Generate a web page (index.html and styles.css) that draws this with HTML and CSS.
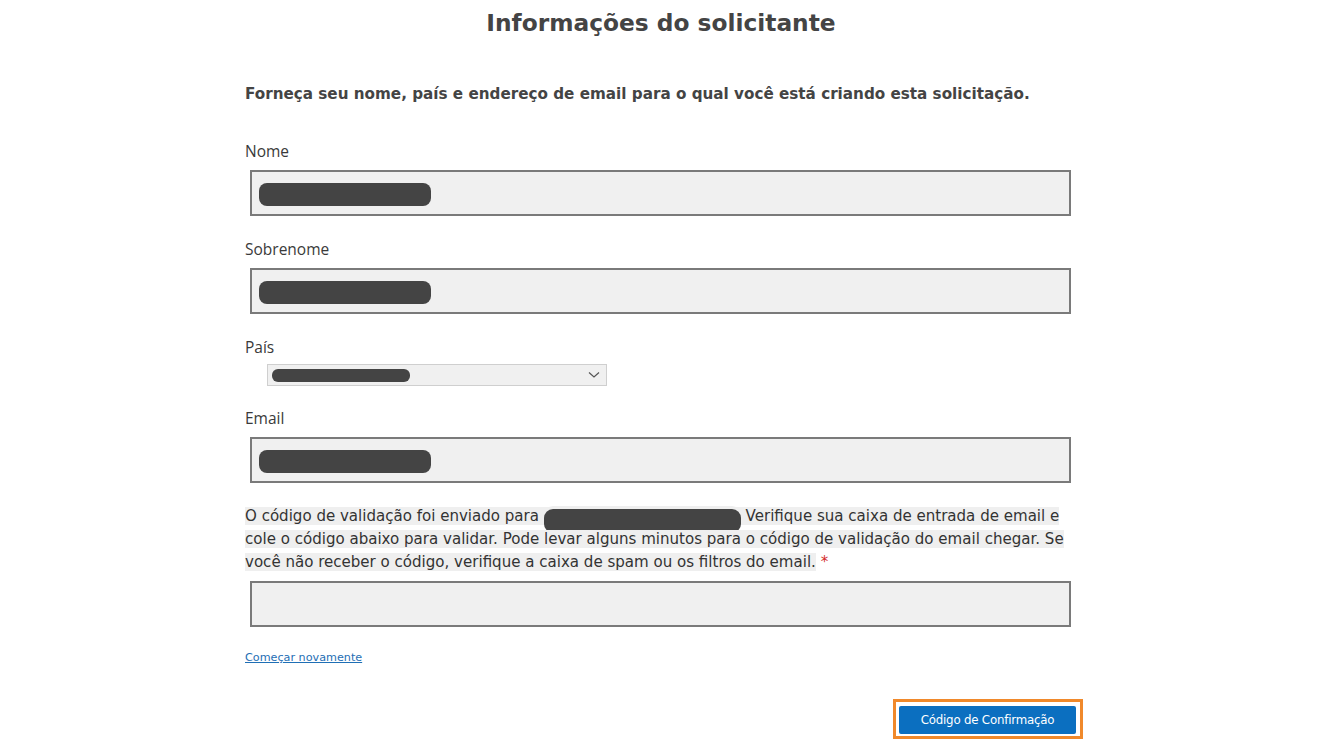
FILE: index.html
```html
<!DOCTYPE html>
<html lang="pt">
<head>
<meta charset="utf-8">
<title>Informações do solicitante</title>
<link rel="stylesheet" href="styles.css">
</head>
<body>
<main class="page">
  <h1 class="title">Informações do solicitante</h1>
  <p class="intro">Forneça seu nome, país e endereço de email para o qual você está criando esta solicitação.</p>

  <div class="field">
    <label class="label">Nome</label>
    <div class="input"><span class="redact r-name"></span></div>
  </div>

  <div class="field">
    <label class="label">Sobrenome</label>
    <div class="input"><span class="redact r-name"></span></div>
  </div>

  <div class="field">
    <label class="label">País</label>
    <div class="select">
      <span class="redact r-country"></span>
      <svg class="chev" width="12" height="8" viewBox="0 0 12 8"><path d="M1 1.5 L6 6 L11 1.5" fill="none" stroke="#555" stroke-width="1.2"/></svg>
    </div>
  </div>

  <div class="field">
    <label class="label label-email">Email</label>
    <div class="input"><span class="redact r-name"></span></div>
  </div>

  <p class="note"><span class="hl">O código de validação foi enviado para <span class="redact r-mail"></span> Verifique sua caixa de entrada de email e cole o código abaixo para validar. Pode levar alguns minutos para o código de validação do email chegar. Se você não receber o código, verifique a caixa de spam ou os filtros do email.</span> <span class="req">*</span></p>
  <div class="input code"></div>

  <a class="restart" href="#">Começar novamente</a>

  <div class="actions">
    <div class="focus-ring"><button class="btn">Código de Confirmação</button></div>
  </div>
</main>
</body>
</html>
```

FILE: styles.css
```css
html, body {
  margin: 0;
  padding: 0;
  background: #ffffff;
}

.page {
  width: 838px;
  margin-left: 245px;
  display: flex;
  flex-direction: column;
  color: #333333;
}

.title {
  margin: 0;
  padding-top: 8px;
  font-family: "DejaVu Sans", Verdana, sans-serif;
  font-weight: bold;
  font-size: 23.3px;
  line-height: 30px;
  color: #444444;
  text-align: center;
  padding-right: 6px;
}

.intro {
  margin: 46px 0 0 0;
  font-family: "DejaVu Sans", Verdana, sans-serif;
  font-weight: bold;
  font-size: 15.2px;
  line-height: 20px;
  color: #444444;
}

.field {
  display: flex;
  flex-direction: column;
  margin-top: 23px;
}

.intro + .field {
  margin-top: 37px;
}

.label {
  font-family: "Open Sans", "Noto Sans", sans-serif;
  font-size: 15.5px;
  line-height: 20px;
  color: #3a3a3a;
  margin-bottom: 9px;
}

.input {
  box-sizing: border-box;
  margin-left: 5px;
  width: 821px;
  height: 46px;
  border: 2px solid #7a7a7a;
  background: #f0f0f0;
  display: flex;
  align-items: center;
  padding-left: 7px;
}

.redact {
  display: inline-block;
  background: #444444;
  border-radius: 8px;
}

.r-name {
  width: 172px;
  height: 23px;
  margin-top: 2px;
}

.field:has(.select) .label {
  margin-bottom: 7px;
}

.field:has(.select) + .field {
  margin-top: 22px;
}

.select {
  box-sizing: border-box;
  margin-left: 22px;
  width: 340px;
  height: 22px;
  border: 1px solid #cfcfcf;
  background: #f0f0f0;
  display: flex;
  align-items: center;
  justify-content: space-between;
  padding: 0 6px 0 4px;
}

.r-country {
  width: 138px;
  height: 13px;
  border-radius: 6px;
}

.chev {
  display: block;
}

.note {
  margin: 22px 0 0 0;
  width: 836px;
  font-family: "DejaVu Sans", Verdana, sans-serif;
  font-size: 15.05px;
  line-height: 23px;
  color: #333333;
}

.hl {
  background: #efefef;
}

.r-mail {
  width: 197px;
  height: 24px;
  margin: -6px 0;
  vertical-align: -6px;
  border-radius: 9px;
  box-shadow: 0 -3px 0 0 #efefef;
}

.req {
  color: #d42a2a;
}

.code {
  margin-top: 7px;
}

.restart {
  margin-top: 23px;
  align-self: flex-start;
  font-family: "DejaVu Sans", Verdana, sans-serif;
  font-size: 11.2px;
  line-height: 16px;
  color: #1f6fb5;
  text-decoration: underline;
}

.actions {
  margin-top: 33px;
  display: flex;
  justify-content: flex-end;
}

.focus-ring {
  border: 3px solid #f0892b;
  padding: 4px 4px 2px 3px;
}

.btn {
  display: block;
  width: 177px;
  height: 28px;
  border: none;
  border-radius: 2px;
  background: #0b6fc0;
  color: #ffffff;
  font-family: "DejaVu Sans", Tahoma, sans-serif;
  font-size: 11.8px;
  letter-spacing: -0.2px;
  padding: 0;
  cursor: pointer;
}
```
